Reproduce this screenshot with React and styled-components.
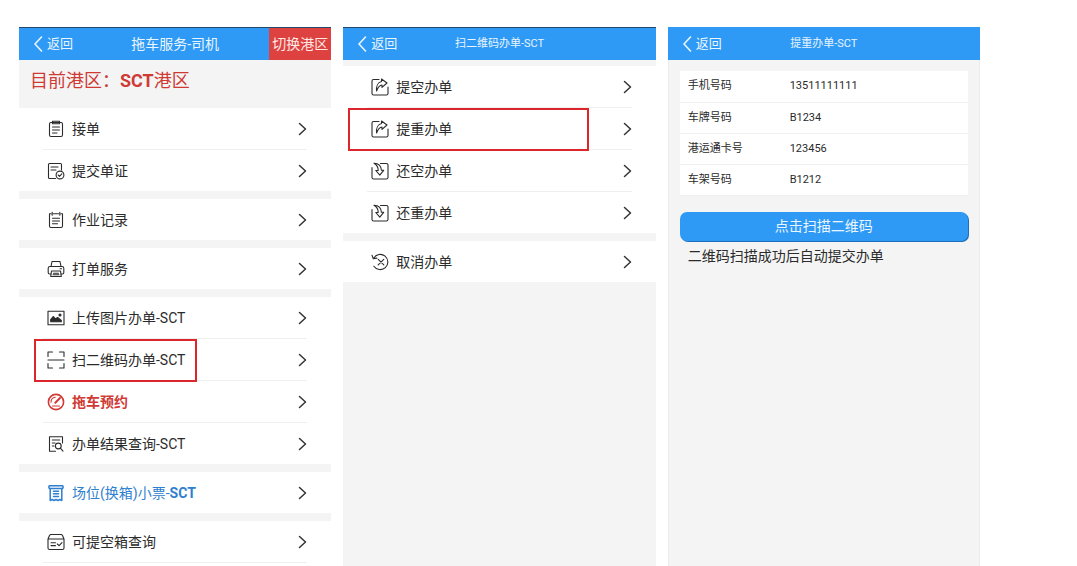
import React from 'react';
import styled, { createGlobalStyle, css } from 'styled-components';

const GlobalStyle = createGlobalStyle`
    *{
        box-sizing: border-box;
    }
    body{
        margin: 0;
        background-color: #fff;
        color: #2b2b2b;
        font-family: Roboto, "Noto Sans CJK SC", sans-serif;
        font-size: 14px;
    }
    button{
        font-family: inherit;
        border: 0;
        cursor: pointer;
    }
`;

const Page = styled.main`
    display: grid;
    grid-template-columns: repeat(3, 1fr);
    gap: 12px;
    min-height: 100vh;
    padding: 27px 97px 0 19px;
`;

const Screen = styled.section`
    display: flex;
    flex-direction: column;
    min-width: 0;
    background-color: #f4f4f4;
`;

const Header = styled.header`
    display: grid;
    grid-template-columns: 1fr auto 1fr;
    align-items: center;
    height: 33px;
    background-color: #2f9af5;
    border-top: 1px solid ${ ({ $line }) => $line || '#2f9af5' };
    color: #e9f5ff;
`;

const BackButton = styled.button`
    display: flex;
    align-items: center;
    justify-self: start;
    gap: 4px;
    padding: 0 0 0 14px;
    background: none;
    color: inherit;
    font-size: 13px;
    line-height: 20px;
`;

const Title = styled.h1`
    margin: 0;
    font-size: ${ ({ $small }) => $small ? '11px' : '14px' };
    font-weight: 400;
    line-height: 20px;
`;

const SwitchButton = styled.button`
    justify-self: end;
    align-self: stretch;
    padding: 0 3px;
    background-color: #dd4140;
    color: #ffe9e4;
    font-size: 14px;
    line-height: 20px;
`;

const Banner = styled.p`
    height: 48px;
    margin: 0;
    padding: 8px 11px 0;
    color: #cf3a35;
    font-size: 18px;
    line-height: 26px;
`;

const Menu = styled.nav`
    display: flex;
    flex: 1;
    flex-direction: column;
    gap: 8px;
    padding-top: ${ ({ $spaced }) => $spaced ? '6px' : '0' };
`;

const Group = styled.ul`
    margin: 0;
    padding: 0 24px;
    background-color: #fff;
    list-style: none;
    ${ ({ $fill }) => $fill && css`
        flex: 1;
        li:last-child{
            border-bottom: 1px solid #efefef;
        }
    `}
`;

const Item = styled.li`
    position: relative;
    & + &{
        border-top: 1px solid #efefef;
    }
`;

const ItemLink = styled.a`
    display: flex;
    align-items: center;
    gap: 7px;
    height: 41px;
    padding-left: 4px;
    color: ${ ({ $color }) => $color || '#2b2b2b' };
    font-weight: ${ ({ $bold }) => $bold ? 700 : 400 };
    line-height: 20px;
    text-decoration: none;
    span{
        flex: 1;
    }
`;

// red frame drawn over the row that has to be tapped
const Mark = styled.div`
    position: absolute;
    z-index: 1;
    top: 0;
    bottom: -2px;
    left: ${ ({ $left }) => $left }px;
    width: ${ ({ $width }) => $width }px;
    border: 2px solid #dc262b;
    pointer-events: none;
`;

const Form = styled.form`
    flex: 1;
    padding: 11px;
    border: solid #ebebeb;
    border-width: 0 1px;
`;

const Data = styled.table`
    width: 100%;
    border-collapse: collapse;
    background-color: #fff;
    font-size: 11px;
    line-height: 16px;
    tr{
        height: 31px;
        border-bottom: 1px solid #f0f0f0;
    }
    th{
        width: 110px;
        padding: 0 0 0 8px;
        font-weight: 400;
        text-align: left;
    }
    td{
        padding: 0;
    }
`;

const ScanButton = styled.button`
    display: block;
    width: 100%;
    height: 29px;
    margin-top: 16px;
    padding: 0;
    border-radius: 7px;
    background-color: #2f9af5;
    box-shadow: 1px 1px 0 0 #1f6fb8;
    color: #e9f5ff;
    font-size: 14px;
    line-height: 20px;
`;

const Note = styled.p`
    margin: 5px 8px 0;
    font-size: 14px;
    line-height: 20px;
`;

const Svg = styled.svg`
    flex: none;
    fill: none;
    stroke: currentColor;
    stroke-width: ${ ({ $stroke }) => $stroke || 1.1 };
    stroke-linecap: round;
    stroke-linejoin: round;
`;

const Arrow = styled(Svg)`
    color: #333;
`;

const share = (
    <>
        <path d="M8 1.5H2.6Q1 1.5 1 3.1v12.3Q1 17 2.600 17h12.800q1.600 0 1.600-1.600V9" />
        <path d="M10.500 1l5.500 4-5 4.400V7C8.500 7.300 7 9.300 5.600 13c-.6-5 1.400-8.800 4.900-9.500z" />
    </>
);

const receive = (
    <>
        <path d="M1 5.500v9.900Q1 17 2.600 17h12.800q1.600 0 1.600-1.600V3.100q0-1.600-1.600-1.600H9.500" />
        <path d="M3 1.300c4 .2 7.200 2.600 7.400 7h2.300l-3.900 4.800-4-4.600h2.400C7.300 5.500 5.800 3 3 1.300z" />
    </>
);

const icons = {
    order: (
        <>
            <rect x="2.500" y="2.500" width="13" height="14" rx="1.500" />
            <path d="M5.500 1.300h7v2.400h-7zM5.500 7h7M5.500 10h7M5.500 13h4.500" />
        </>
    ),
    submit: (
        <>
            <path d="M14.500 8V2.600q0-1.100-1.100-1.100H2.600q-1.100 0-1.100 1.100v12.800q0 1.100 1.100 1.100h6" />
            <path d="M4 5h7M4 8h5" />
            <circle cx="13" cy="13" r="3.900" />
            <path d="M11.200 13l1.300 1.300 2.300-2.500" />
        </>
    ),
    record: (
        <>
            <path d="M4 2.800H2.500V15q0 1.500 1.500 1.500h10q1.500 0 1.500-1.500V2.800H14M6.500 2.800h5M5.200 1.200v3M12.800 1.200v3M5.500 7.200h7M5.500 10h7M5.500 12.800h5" />
        </>
    ),
    print: (
        <>
            <path d="M4 6.500l1-5h8l1 5" />
            <path d="M4 14H2.600Q1.200 14 1.200 12.500V8.300q0-1.800 1.800-1.800h12q1.800 0 1.800 1.800v4.200q0 1.500-1.400 1.500H14" />
            <path d="M4.500 11h9l.8 5.500H3.700zM6.500 13.200h5M6 14.800h6M13 8.700h1.500" />
        </>
    ),
    image: (
        <>
            <rect x="1" y="2.200" width="16" height="13.600" />
            <path d="M3.700 12.800V10.500l2.500-3 2.200 2.300 2.300-1.300 3.600 3v1.300z" fill="currentColor" />
            <circle cx="13" cy="6" r="1" fill="currentColor" />
        </>
    ),
    scan: (
        <>
            <path d="M1 5.500V1h4.500M12.500 1H17v4.500M17 12.500V17h-4.500M5.500 17H1v-4.500M1 9h16" />
        </>
    ),
    gauge: (
        <>
            <circle cx="9" cy="9" r="7.600" strokeWidth="1.600" />
            <path d="M13 5L8.300 9.700" strokeWidth="2" />
            <path d="M4 9.200C4 6.600 5.800 4.500 8.300 4.200M5.500 13h7" />
        </>
    ),
    search: (
        <>
            <path d="M15.500 8V1.800h-13v14.400h6M5.300 5h7.400M5.300 8H8M5.300 11H7" />
            <circle cx="11.300" cy="11" r="2.900" />
            <path d="M13.400 13.200l2.600 3" />
        </>
    ),
    ticket: (
        <g strokeWidth="1.500">
            <path d="M3.200 4.500v12l2-1 1.900 1 1.900-1 1.900 1 1.900-1 2 1v-12" />
            <path d="M3.200 4.500H2.300q-1-1.400 0-2.800h13.400q1 1.400 0 2.800h-.9zM6.500 7.200h5M6.500 9.800h5M6.500 12.400h5" />
        </g>
    ),
    box: (
        <>
            <path d="M1 6l1.500-3.500Q3 1.500 4 1.500h10q1 0 1.500 1L17 6v9q0 1.500-1.500 1.500h-13Q1 16.500 1 15zM1 6h16M4 9.800h4.500M4 12.600h4.500M10.300 11l1.800 1.700L15 9.600" />
        </>
    ),
    pickup: share,
    giveBack: receive,
    cancel: (
        <>
            <path d="M2.700 5.200a7.600 7.600 0 1 1 .2 8M1 2.300l1.300 3.500 3.600-.7M7.200 6.300l5.600 5.600M12.800 6.300l-5.600 5.600" />
        </>
    ),
};

const serviceGroups = [
    [
        { icon: 'order', label: '接单' },
        { icon: 'submit', label: '提交单证' },
    ],
    [{ icon: 'record', label: '作业记录' }],
    [{ icon: 'print', label: '打单服务' }],
    [
        { icon: 'image', label: '上传图片办单-SCT' },
        { icon: 'scan', label: '扫二维码办单-SCT', mark: { left: -9, width: 163 } },
        { icon: 'gauge', label: '拖车预约', color: '#cf3a35', bold: true },
        { icon: 'search', label: '办单结果查询-SCT' },
    ],
    [{ icon: 'ticket', label: <>场位(换箱)小票-<b>SCT</b></>, color: '#2f80cf' }],
    [{ icon: 'box', label: '可提空箱查询' }],
];

const scanGroups = [
    [
        { icon: 'pickup', label: '提空办单' },
        { icon: 'pickup', label: '提重办单', mark: { left: -19, width: 241 } },
        { icon: 'giveBack', label: '还空办单' },
        { icon: 'giveBack', label: '还重办单' },
    ],
    [{ icon: 'cancel', label: '取消办单' }],
];

const fields = [
    ['手机号码', '13511111111'],
    ['车牌号码', 'B1234'],
    ['港运通卡号', '123456'],
    ['车架号码', 'B1212'],
];

const Back = () => (
    <BackButton type="button">
        <Svg width="10" height="16" viewBox="0 0 10 16" $stroke={ 1.6 } aria-hidden="true">
            <path d="M8.500 1L2 8l6.500 7" />
        </Svg>
        返回
    </BackButton>
);

const MenuGroups = ({ groups, spaced, fill }) => (
    <Menu $spaced={ spaced }>
        {
            groups.map( (items, i) => (
                <Group key={ i } $fill={ fill && i === groups.length - 1 }>
                    {
                        items.map( ({ icon, label, color, bold, mark }, j) => (
                            <Item key={ j }>
                                <ItemLink href="#" $color={ color } $bold={ bold }>
                                    <Svg width="18" height="18" viewBox="0 0 18 18" aria-hidden="true">
                                        { icons[icon] }
                                    </Svg>
                                    <span>{ label }</span>
                                    <Arrow width="9" height="14" viewBox="0 0 9 14" $stroke={ 1.5 } aria-hidden="true">
                                        <path d="M1.500 1.500L7.500 7l-6 5.500" />
                                    </Arrow>
                                </ItemLink>
                                { mark && <Mark $left={ mark.left } $width={ mark.width } /> }
                            </Item>
                        ))
                    }
                </Group>
            ))
        }
    </Menu>
);

const App = () => {

    const handleSubmit = (e) => {
        e.preventDefault();
    }

    return (
        <>
            <GlobalStyle />
            <Page>
                <Screen>
                    <Header $line="#24486b">
                        <Back />
                        <Title>拖车服务-司机</Title>
                        <SwitchButton type="button">切换港区</SwitchButton>
                    </Header>
                    <Banner>目前港区：<b>SCT</b>港区</Banner>
                    <MenuGroups groups={ serviceGroups } fill />
                </Screen>

                <Screen>
                    <Header $line="#24486b">
                        <Back />
                        <Title $small>扫二维码办单-SCT</Title>
                    </Header>
                    <MenuGroups groups={ scanGroups } spaced />
                </Screen>

                <Screen>
                    <Header>
                        <Back />
                        <Title $small>提重办单-SCT</Title>
                    </Header>
                    <Form onSubmit={ handleSubmit }>
                        <Data>
                            <tbody>
                                {
                                    fields.map( ([name, value]) => (
                                        <tr key={ name }>
                                            <th scope="row">{ name }</th>
                                            <td>{ value }</td>
                                        </tr>
                                    ))
                                }
                            </tbody>
                        </Data>
                        <ScanButton type="submit">点击扫描二维码</ScanButton>
                        <Note>二维码扫描成功后自动提交办单</Note>
                    </Form>
                </Screen>
            </Page>
        </>
    )
}

export default App;
